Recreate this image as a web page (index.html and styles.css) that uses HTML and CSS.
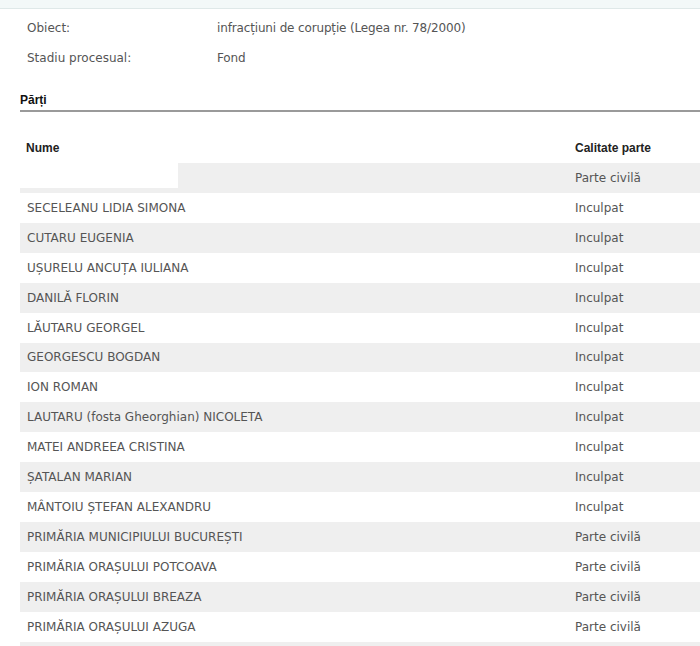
FILE: index.html
```html
<!DOCTYPE html>
<html lang="ro">
<head>
<meta charset="utf-8">
<title>Dosar</title>
<link rel="stylesheet" href="styles.css">
</head>
<body>
<div class="topbar"></div>
<div class="info">
  <div class="info-row"><span class="label">Obiect:</span><span class="value">infracțiuni de corupție (Legea nr. 78/2000)</span></div>
  <div class="info-row"><span class="label">Stadiu procesual:</span><span class="value">Fond</span></div>
</div>
<div class="section">
  <h2 class="section-title">Părți</h2>
  <table class="parti">
    <thead>
      <tr><th class="c-name">Nume</th><th class="c-role">Calitate parte</th></tr>
    </thead>
    <tbody>
      <tr><td class="c-name redacted"><span class="mask"></span></td><td>Parte civilă</td></tr>
      <tr><td class="c-name">SECELEANU LIDIA SIMONA</td><td>Inculpat</td></tr>
      <tr><td class="c-name">CUTARU EUGENIA</td><td>Inculpat</td></tr>
      <tr><td class="c-name">UȘURELU ANCUȚA IULIANA</td><td>Inculpat</td></tr>
      <tr><td class="c-name">DANILĂ FLORIN</td><td>Inculpat</td></tr>
      <tr><td class="c-name">LĂUTARU GEORGEL</td><td>Inculpat</td></tr>
      <tr><td class="c-name">GEORGESCU BOGDAN</td><td>Inculpat</td></tr>
      <tr><td class="c-name">ION ROMAN</td><td>Inculpat</td></tr>
      <tr><td class="c-name">LAUTARU (fosta Gheorghian) NICOLETA</td><td>Inculpat</td></tr>
      <tr><td class="c-name">MATEI ANDREEA CRISTINA</td><td>Inculpat</td></tr>
      <tr><td class="c-name">ȘATALAN MARIAN</td><td>Inculpat</td></tr>
      <tr><td class="c-name">MÂNTOIU ȘTEFAN ALEXANDRU</td><td>Inculpat</td></tr>
      <tr><td class="c-name">PRIMĂRIA MUNICIPIULUI BUCUREȘTI</td><td>Parte civilă</td></tr>
      <tr><td class="c-name">PRIMĂRIA ORAȘULUI POTCOAVA</td><td>Parte civilă</td></tr>
      <tr><td class="c-name">PRIMĂRIA ORAȘULUI BREAZA</td><td>Parte civilă</td></tr>
      <tr><td class="c-name">PRIMĂRIA ORAȘULUI AZUGA</td><td>Parte civilă</td></tr>
      <tr><td class="c-name">&nbsp;</td><td>&nbsp;</td></tr>
    </tbody>
  </table>
</div>
</body>
</html>
```
FILE: styles.css
```css
html, body {
  margin: 0;
  padding: 0;
  background: #fff;
  overflow: hidden;
}
body {
  font-family: "DejaVu Sans", Tahoma, sans-serif;
  font-size: 12px;
  color: #555;
}
.topbar {
  height: 8px;
  background: #f3f8f8;
  border-bottom: 1px solid #dfe8e8;
}
.info {
  padding: 4px 0 0 27px;
}
.info-row {
  display: flex;
  height: 30px;
  align-items: center;
}
.label {
  width: 190px;
}
.value {
  letter-spacing: -0.15px;
}
.section {
  padding-left: 20px;
}
.section-title {
  margin: 0;
  padding-top: 19px;
  height: 17px;
  line-height: 17px;
  font-family: "Liberation Sans", Arial, sans-serif;
  font-weight: bold;
  font-size: 12px;
  color: #111;
  border-bottom: 2px solid #9a9a9a;
  padding-bottom: 1px;
}
.parti {
  border-collapse: collapse;
  width: 700px;
  margin-top: 22px;
}
.parti th {
  font-family: "Liberation Sans", Arial, sans-serif;
  font-weight: bold;
  font-size: 12px;
  color: #222;
  text-align: left;
  height: 28px;
  padding: 0 0 1px 7px;
  vertical-align: middle;
}
.parti th.c-name {
  padding-left: 6px;
}
.parti td {
  height: 29.93px;
  padding: 0 0 0 7px;
  vertical-align: middle;
  white-space: nowrap;
}
.parti th.c-name, .parti td.c-name {
  width: 541px;
}
.parti tbody tr:nth-child(odd) td {
  background: #efefef;
}
.parti td.redacted {
  padding: 0;
  vertical-align: top;
}
.mask {
  display: block;
  width: 158px;
  height: 25px;
  background: #fff;
}
```
